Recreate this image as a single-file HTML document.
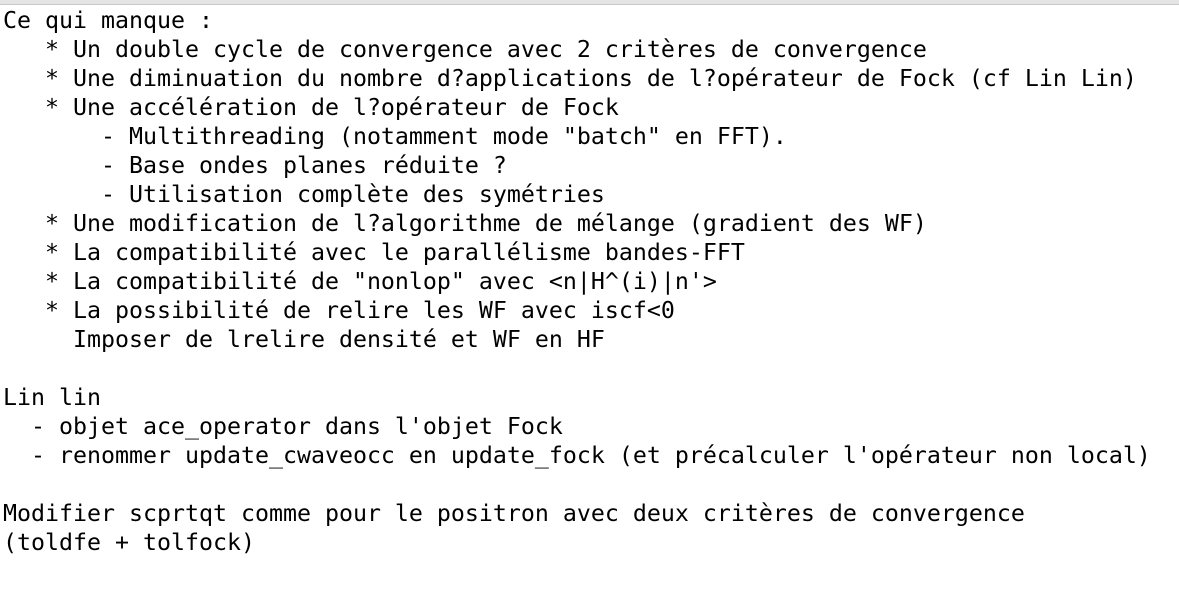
<!DOCTYPE html>
<html><head><meta charset="utf-8"><style>
html,body{margin:0;padding:0;background:#fff;width:1179px;height:589px;overflow:hidden}
.bar{height:4px;background:#e4e4e4;border-bottom:1px solid #c8c8c8}
pre{margin:0;padding:1px 0 0 3px;font-family:"DejaVu Sans Mono","Liberation Mono",monospace;font-size:23.25px;line-height:29px;color:#000;white-space:pre}
</style></head><body><div class="bar"></div><pre>Ce qui manque :
   * Un double cycle de convergence avec 2 critères de convergence
   * Une diminuation du nombre d?applications de l?opérateur de Fock (cf Lin Lin)
   * Une accélération de l?opérateur de Fock
       - Multithreading (notamment mode "batch" en FFT).
       - Base ondes planes réduite ?
       - Utilisation complète des symétries
   * Une modification de l?algorithme de mélange (gradient des WF)
   * La compatibilité avec le parallélisme bandes-FFT
   * La compatibilité de "nonlop" avec &lt;n|H^(i)|n'&gt;
   * La possibilité de relire les WF avec iscf&lt;0
     Imposer de lrelire densité et WF en HF

Lin lin
  - objet ace_operator dans l'objet Fock
  - renommer update_cwaveocc en update_fock (et précalculer l'opérateur non local)

Modifier scprtqt comme pour le positron avec deux critères de convergence
(toldfe + tolfock)
</pre></body></html>
